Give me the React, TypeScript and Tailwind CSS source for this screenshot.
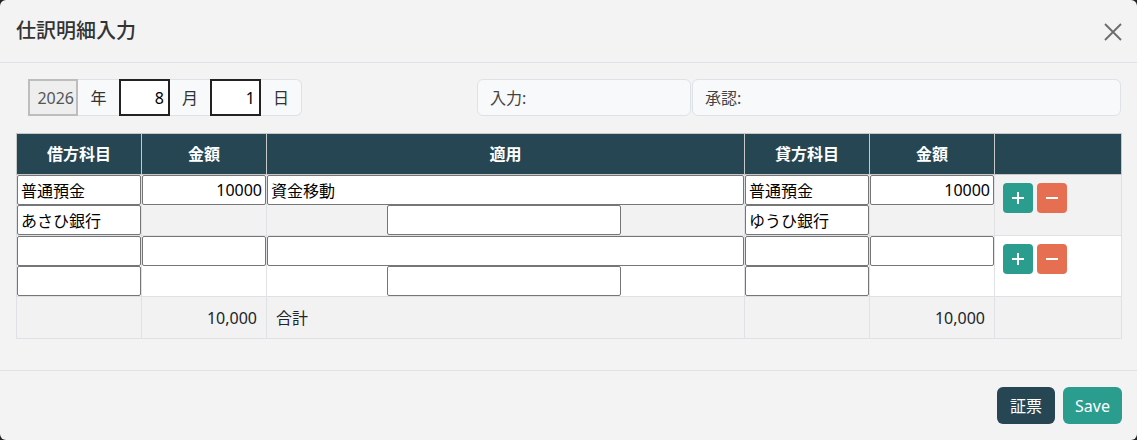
import React from "react";

const font = { fontFamily: '"Noto Sans", "Noto Sans CJK JP", sans-serif' };

function Inp({ value = "", right = false, w = "w-full" }: { value?: string; right?: boolean; w?: string }) {
  return (
    <input
      readOnly
      value={value}
      className={`${w} h-[30px] block border border-[#767676] rounded-[2px] bg-white px-[3px] text-[16px] text-black outline-none ${right ? "text-right" : "text-left"}`}
      style={font}
    />
  );
}

function PlusMinus() {
  return (
    <div className="flex gap-1 pl-2 pt-2">
      <button className="w-[30px] h-[30px] rounded-[4px] bg-[#2a9d8f] flex items-center justify-center">
        <svg width="14" height="14" viewBox="0 0 14 14">
          <path d="M7 1v12M1 7h12" stroke="white" strokeWidth="2" />
        </svg>
      </button>
      <button className="w-[30px] h-[30px] rounded-[4px] bg-[#e76f51] flex items-center justify-center">
        <svg width="14" height="14" viewBox="0 0 14 14">
          <path d="M1 7h12" stroke="white" strokeWidth="2" />
        </svg>
      </button>
    </div>
  );
}

function EntryRow({
  striped,
  debit1,
  debit2,
  amt1,
  memo,
  credit1,
  credit2,
  amt2,
}: {
  striped: boolean;
  debit1: string;
  debit2: string;
  amt1: string;
  memo: string;
  credit1: string;
  credit2: string;
  amt2: string;
}) {
  const bg = striped ? "bg-[#f2f2f2]" : "bg-white";
  return (
    <tr className={bg}>
      <td className="p-0 border border-[#dee2e6] align-top">
        <Inp value={debit1} />
        <Inp value={debit2} />
      </td>
      <td className="p-0 border border-[#dee2e6] align-top">
        <Inp value={amt1} right />
        <div className="h-[30px]" />
      </td>
      <td className="p-0 border border-[#dee2e6] align-top">
        <Inp value={memo} />
        <div className="flex justify-center pr-[4px]">
          <Inp w="w-[234px]" />
        </div>
      </td>
      <td className="p-0 border border-[#dee2e6] align-top">
        <Inp value={credit1} />
        <Inp value={credit2} />
      </td>
      <td className="p-0 border border-[#dee2e6] align-top">
        <Inp value={amt2} right />
        <div className="h-[30px]" />
      </td>
      <td className="p-0 border border-[#dee2e6] align-top">
        <PlusMinus />
      </td>
    </tr>
  );
}

export default function App() {
  return (
    <div className="w-[1137px] h-[440px] bg-[#222] overflow-hidden" style={font}>
      <div className="w-full h-full bg-[#f3f3f3] rounded-[6px] flex flex-col text-[#212529]">
        {/* header */}
        <div className="h-[63px] flex items-center justify-between pl-4 pr-[14px] border-b border-[#dee2e6]">
          <h1 className="text-[20px] font-medium text-[#333] leading-[30px]">仕訳明細入力</h1>
          <svg width="20" height="20" viewBox="0 0 20 20" className="mt-px">
            <path d="M2 2L18 18M18 2L2 18" stroke="#6b6b6b" strokeWidth="1.8" />
          </svg>
        </div>

        {/* body */}
        <div className="px-4 pt-4 pb-[31px] border-b border-[#dee2e6]">
          <div className="flex items-stretch h-[37px]">
            <div className="ml-3 flex h-full">
              <div className="w-[50px] h-full bg-[#eeeeee] border-2 border-[#bdbdbd] flex items-center justify-end pr-[2px] text-[16px] text-[#555]">
                2026
              </div>
              <div className="w-[41px] h-full bg-[#f8f9fa] border-y border-[#dee2e6] flex items-center justify-center text-[16px] text-[#333]">
                年
              </div>
              <div className="w-[51px] h-full bg-white border-2 border-[#222] flex items-center justify-end pr-[4px] text-[16px] text-black">
                8
              </div>
              <div className="w-[40px] h-full bg-[#f8f9fa] border-y border-[#dee2e6] flex items-center justify-center text-[16px] text-[#333]">
                月
              </div>
              <div className="w-[51px] h-full bg-white border-2 border-[#222] flex items-center justify-end pr-[4px] text-[16px] text-black">
                1
              </div>
              <div className="w-[41px] h-full bg-[#f8f9fa] border border-l-0 border-[#dee2e6] rounded-r-[6px] flex items-center justify-center text-[16px] text-[#333]">
                日
              </div>
            </div>
            <div className="ml-[175px] w-[214px] h-full bg-[#f8f9fa] border border-[#dee2e6] rounded-[6px] flex items-center pl-3 text-[16px] text-[#444]">
              入力:
            </div>
            <div className="ml-px w-[429px] h-full bg-[#f8f9fa] border border-[#dee2e6] rounded-[6px] flex items-center pl-3 text-[16px] text-[#444]">
              承認:
            </div>
          </div>

          <table className="mt-[17px] w-[1105px] table-fixed border-collapse border border-[#dee2e6]">
            <colgroup>
              <col className="w-[125px]" />
              <col className="w-[125px]" />
              <col className="w-[478px]" />
              <col className="w-[125px]" />
              <col className="w-[125px]" />
              <col className="w-[127px]" />
            </colgroup>
            <thead>
              <tr className="bg-[#264653] text-white">
                {["借方科目", "金額", "適用", "貸方科目", "金額", ""].map((h, i) => (
                  <th
                    key={i}
                    className="h-[41px] p-0 border border-[#c8c8c8] text-[16px] font-bold text-center align-middle"
                  >
                    {h}
                  </th>
                ))}
              </tr>
            </thead>
            <tbody>
              <EntryRow
                striped
                debit1="普通預金"
                debit2="あさひ銀行"
                amt1="10000"
                memo="資金移動"
                credit1="普通預金"
                credit2="ゆうひ銀行"
                amt2="10000"
              />
              <EntryRow striped={false} debit1="" debit2="" amt1="" memo="" credit1="" credit2="" amt2="" />
              <tr className="bg-[#f2f2f2] text-[16px] text-[#212529]">
                <td className="h-[42px] border border-[#dee2e6] px-2"></td>
                <td className="h-[42px] border border-[#dee2e6] px-2 text-right pr-[9px]">10,000</td>
                <td className="h-[42px] border border-[#dee2e6] pl-[9px]">合計</td>
                <td className="h-[42px] border border-[#dee2e6] px-2"></td>
                <td className="h-[42px] border border-[#dee2e6] px-2 text-right pr-[9px]">10,000</td>
                <td className="h-[42px] border border-[#dee2e6] px-2"></td>
              </tr>
            </tbody>
          </table>
        </div>

        {/* footer */}
        <div className="flex justify-end items-center gap-2 pt-4 pr-[15px]">
          <button className="h-[37px] px-[13px] rounded-[6px] bg-[#264653] text-white text-[16px]">証票</button>
          <button className="h-[37px] px-[12px] rounded-[6px] bg-[#2a9d8f] text-white text-[16px]">Save</button>
        </div>
      </div>
    </div>
  );
}
